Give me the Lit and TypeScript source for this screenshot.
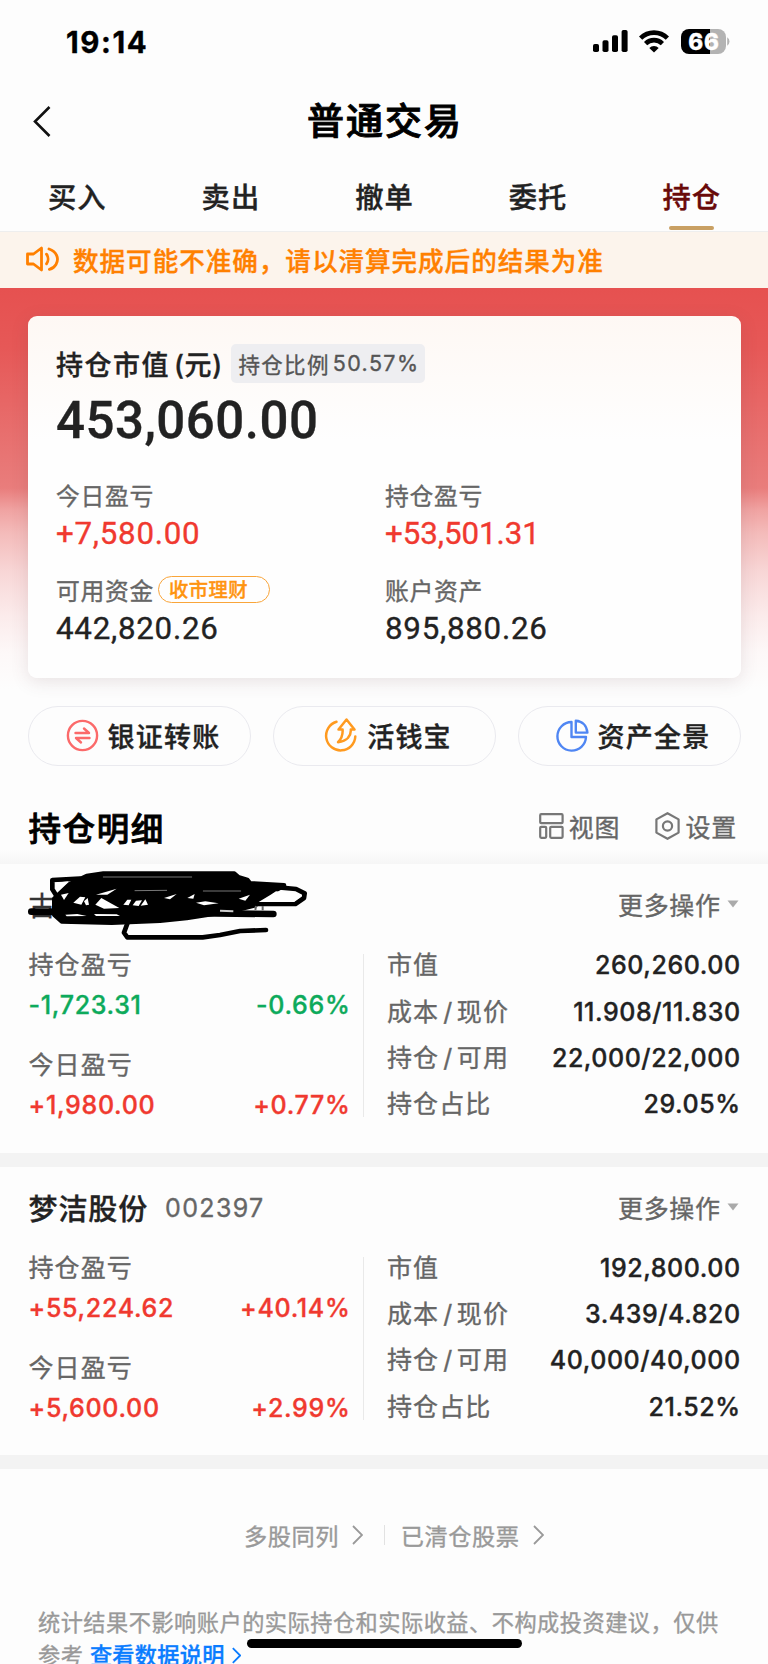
import { LitElement, html, css, nothing } from "lit";
import { customElement, property } from "lit/decorators.js";

interface Holding {
  name: string;
  code: string;
  redacted?: boolean;
  profit: [string, string];
  today: [string, string];
  rows: [string, string][];
}

const TABS = ["买入", "卖出", "撤单", "委托", "持仓"];

const HOLDINGS: Holding[] = [
  {
    name: "古",
    code: "",
    redacted: true,
    profit: ["-1,723.31", "-0.66%"],
    today: ["+1,980.00", "+0.77%"],
    rows: [
      ["市值", "260,260.00"],
      ["成本/现价", "11.908/11.830"],
      ["持仓/可用", "22,000/22,000"],
      ["持仓占比", "29.05%"],
    ],
  },
  {
    name: "梦洁股份",
    code: "002397",
    profit: ["+55,224.62", "+40.14%"],
    today: ["+5,600.00", "+2.99%"],
    rows: [
      ["市值", "192,800.00"],
      ["成本/现价", "3.439/4.820"],
      ["持仓/可用", "40,000/40,000"],
      ["持仓占比", "21.52%"],
    ],
  },
];

const chevron = (cls: string, w: number) => html`
  <svg class=${cls} viewBox="0 0 11 20" fill="none" stroke="currentColor" stroke-width=${w}>
    <path d="M1 1L10 10L1 19" />
  </svg>`;

@customElement("status-bar")
export class StatusBar extends LitElement {
  static styles = css`
    :host { display: flex; align-items: center; height: 82px; padding: 0 38px 0 66px; color: #000; }
    .time { flex: 1; font-size: 29.5px; font-weight: 700; letter-spacing: 1.6px; line-height: 40px; padding-top: 1px; }
    svg { display: block; }
    .signal { margin-right: 11px; }
    .wifi { margin-right: 12px; }
    .battery { position: relative; width: 49px; height: 25px; }
    .level { position: absolute; inset: 0 3px 0 0; display: flex; align-items: center; justify-content: center;
      font-size: 22.5px; font-weight: 800; color: #fff; letter-spacing: .8px; }
  `;
  render() {
    return html`
      <span class="time">19:14</span>
      <svg class="signal" width="35" height="22" viewBox="0 0 35 22">
        <rect x="0" y="14" width="6" height="8" rx="1.8" />
        <rect x="9.5" y="10.3" width="6" height="11.7" rx="1.8" />
        <rect x="19" y="5.2" width="6" height="16.8" rx="1.8" />
        <rect x="28.6" y="0" width="6" height="22" rx="1.8" />
      </svg>
      <svg class="wifi" width="30" height="23" viewBox="0 0 30 23" fill="none" stroke="#000" stroke-width="4.6">
        <path d="M1.6 8.2A19 19 0 0 1 28.4 8.2" />
        <path d="M6.6 13.6A12 12 0 0 1 23.4 13.6" />
        <path d="M15 22.5L10.3 18A6.6 6.6 0 0 1 19.7 18Z" fill="#000" stroke="none" />
      </svg>
      <div class="battery">
        <svg width="49" height="25" viewBox="0 0 49 25">
          <path d="M8 0H29V25H8A8 8 0 0 1 0 17V8A8 8 0 0 1 8 0Z" />
          <path d="M29 0H37A8 8 0 0 1 45 8V17A8 8 0 0 1 37 25H29Z" fill="#b3b3b3" />
          <path d="M46.2 8.3A5 5 0 0 1 46.2 16.7Z" fill="#b3b3b3" />
        </svg>
        <span class="level">66</span>
      </div>`;
  }
}

@customElement("asset-card")
export class AssetCard extends LitElement {
  static styles = css`
    :host { display: block; box-sizing: border-box; height: 362px; padding: 28px 28px 0 28.5px; border-radius: 9px;
      background: linear-gradient(#fef8f4 0, #fefefe 125px); box-shadow: 0 4px 18px rgba(90, 60, 70, .13); }
    .head { display: flex; align-items: center; height: 39px; }
    .title { width: 175px; font-size: 27px; font-weight: 500; letter-spacing: 1.5px; color: #222; white-space: nowrap; }
    .paren { margin-left: 4px; letter-spacing: .6px; }
    .badge { display: flex; align-items: center; box-sizing: border-box; width: 194px; height: 39px; padding: 0 0 1px 7.5px;
      border-radius: 5px; background: #eeeef1; color: #555; font-size: 21.5px; letter-spacing: 1.3px; white-space: nowrap; }
    .ratio { margin-left: 3px; letter-spacing: 1.4px; }
    .total { height: 58px; margin-top: 9px; font: 500 51px/58px Roboto, sans-serif; letter-spacing: .5px; color: #222; }
    .grid { display: grid; grid-template-columns: 329px 1fr; row-gap: 24px; margin-top: 29px; }
    .label { display: flex; align-items: center; height: 30px; font-size: 23.8px; letter-spacing: .7px; color: #666; }
    .pill { display: flex; align-items: center; box-sizing: border-box; width: 112px; height: 27px; margin-left: 4px; padding-left: 10px;
      border: 1.5px solid #f9a53a; border-radius: 14px; color: #ff9410; font-size: 19.3px; font-weight: 500; letter-spacing: .5px; }
    .value { margin: 7px 0 -2px; font: 400 31.3px/36px Roboto, sans-serif; letter-spacing: .75px; color: #222; }
    .up { color: #f0392f; }
    .tight { letter-spacing: -.05px; }
  `;
  render() {
    return html`
      <div class="head">
        <span class="title">持仓市值<span class="paren">(元)</span></span>
        <span class="badge">持仓比例<span class="ratio">50.57%</span></span>
      </div>
      <div class="total">453,060.00</div>
      <div class="grid">
        <div><div class="label">今日盈亏</div><div class="value up">+7,580.00</div></div>
        <div><div class="label">持仓盈亏</div><div class="value up tight">+53,501.31</div></div>
        <div><div class="label">可用资金<span class="pill">收市理财</span></div><div class="value">442,820.26</div></div>
        <div><div class="label">账户资产</div><div class="value">895,880.26</div></div>
      </div>`;
  }
}

@customElement("holding-item")
export class HoldingItem extends LitElement {
  @property({ attribute: false }) data!: Holding;
  static styles = css`
    :host { display: block; box-sizing: border-box; height: 302.5px; border-bottom: 14.5px solid #f3f3f3; padding: 20px 28px 0 28.5px; }
    .head { position: relative; display: flex; align-items: center; height: 40px; }
    .name { font-size: 29px; font-weight: 500; letter-spacing: .9px; color: #222; }
    .thin { font-weight: 400; font-size: 27px; color: #333; }
    .code { margin: 2px 0 0 17px; font-size: 25px; letter-spacing: 1.35px; color: #666; }
    .scribble { position: absolute; left: -8.5px; top: -22px; width: 300px; height: 90px; }
    .more { display: flex; align-items: center; gap: 6px; margin-left: auto; margin-right: 1.5px; font-size: 25px; letter-spacing: .6px; color: #666; }
    .body { display: flex; margin-top: 30px; height: 163px; }
    .left { box-sizing: border-box; width: 335px; padding-right: 12px; border-right: 1.5px solid #e9e9e9; }
    .right { flex: 1; padding-left: 23.5px; margin-top: -12px; }
    .label { font-size: 25px; letter-spacing: 1.1px; color: #666; line-height: 40px; white-space: nowrap; }
    .left .label { margin-top: -9px; }
    .left .pair + .label { margin-top: 20px; }
    .pair, .row { display: flex; justify-content: space-between; align-items: center; }
    .pair { height: 40px; font-size: 25px; font-weight: 500; letter-spacing: .7px; }
    .row { height: 46.4px; }
    .num { font-size: 25px; font-weight: 500; color: #222; letter-spacing: .55px; margin-right: -.6px; }
    .slash { margin: 0 3.5px 0 4px; }
    .up { color: #f0392f; }
    .down { color: #0daa5b; }
  `;
  private scribble() {
    return html`<svg class="scribble" viewBox="0 0 900 270" fill="none" stroke="#000" stroke-width="14" stroke-linecap="round" stroke-linejoin="round">
      <path d="M103 110L150 66L200 42L250 35H643L655 46L682 54L690 64L792 70L748 96L705 130L640 146L500 168L420 176L275 182L125 178L103 158Z" fill="#000" />
      <path d="M180 50L97 54V82L112 106" />
      <path d="M690 68L828 81L854 94L852 108L826 126H690" />
      <path d="M34 149L400 152L760 156" stroke-width="20" />
      <path d="M322 185L312 212L322 226H548L600 219L660 207L738 204" />
      <g fill="#fff" stroke="none">
        <path d="M106 62L146 58L112 90Z" />
        <path d="M123 98L146 93L132 114Z" />
        <path d="M160 122L180 104L196 106L184 128Z" />
        <path d="M192 118L203 108L207 128L198 130Z" />
        <path d="M226 128L244 108L298 138L252 140Z" />
        <path d="M136 158L172 156L200 162L140 163Z" />
        <path d="M222 156L290 157L300 162L228 162Z" />
        <path d="M310 128L322 113L334 113L326 130Z" />
        <path d="M338 130L348 116L366 115L356 132Z" />
        <path d="M362 131L376 112L384 128Z" />
        <path d="M228 98L290 80L262 98Z" />
        <path d="M432 108L470 96L450 112Z" />
        <path d="M502 108L524 96L520 110Z" />
        <path d="M528 122L556 118L596 124L552 130Z" />
        <path d="M656 110L690 98L676 116Z" />
        <path d="M752 98L768 88L826 94L842 104L822 120L716 120Z" />
      </g>
      <g stroke="#777" stroke-width="3">
        <path d="M250 45H515" /><path d="M550 87H662" /><path d="M345 86L440 85" />
      </g>
      <g stroke="#666" stroke-width="6" stroke-linecap="butt">
        <path d="M728 132V145" /><path d="M708 132L706 144" /><path d="M600 146L640 148" stroke="#ccc" />
      </g>
    </svg>`;
  }
  render() {
    const d = this.data;
    const tone = (v: string) => (v.startsWith("-") ? "down" : "up");
    const label = (l: string) => {
      const [a, b] = l.split("/");
      return b ? html`${a}<span class="slash">/</span>${b}` : a;
    };
    return html`
      <div class="head">
        <span class="name ${d.redacted ? "thin" : ""}">${d.name}</span>
        ${d.code ? html`<span class="code">${d.code}</span>` : nothing}
        ${d.redacted ? this.scribble() : nothing}
        <span class="more">更多操作<svg width="12" height="8" viewBox="0 0 12 8"><path d="M.5 .5H11.5L6 7.5Z" fill="#aaa" /></svg></span>
      </div>
      <div class="body">
        <div class="left">
          <div class="label">持仓盈亏</div>
          <div class="pair ${tone(d.profit[0])}"><span>${d.profit[0]}</span><span>${d.profit[1]}</span></div>
          <div class="label">今日盈亏</div>
          <div class="pair ${tone(d.today[0])}"><span>${d.today[0]}</span><span>${d.today[1]}</span></div>
        </div>
        <div class="right">
          ${d.rows.map(([l, v]) => html`<div class="row"><span class="label">${label(l)}</span><span class="num">${v}</span></div>`)}
        </div>
      </div>`;
  }
}

@customElement("app-root")
export class AppRoot extends LitElement {
  static styles = css`
    :host { display: block; position: relative; height: 1664px; overflow: hidden; background: #fdfdfd; color: #222;
      font-family: Inter, "Noto Sans CJK SC", sans-serif; -webkit-text-stroke: .35px; }
    svg { display: block; flex: none; }
    .nav { display: grid; grid-template-columns: 52px 1fr 52px; align-items: center; height: 74px; }
    .back { width: 18px; height: 31px; margin: 5px 0 0 33px; }
    .nav-title { padding-left: 2px; text-align: center; font-size: 37px; font-weight: 500; letter-spacing: 2px; color: #000; -webkit-text-stroke: .9px; }
    .tabs { display: grid; grid-template-columns: repeat(5, 1fr); height: 76px; box-sizing: border-box; border-bottom: 1px solid #eee; }
    .tab { display: flex; flex-direction: column; align-items: center; padding-top: 22px; font-size: 28.3px; line-height: 40px; font-weight: 500; letter-spacing: 1px; text-indent: 1px; }
    .active { color: #690a0a; }
    .active::after { content: ""; width: 45px; height: 4px; margin-top: 8px; border-radius: 2px; background: #c9a063; }
    .notice { display: flex; align-items: center; gap: 14px; height: 56px; box-sizing: border-box; padding: 0 0 2px 26px; background: #fcf4ec;
      color: #ff8000; font-size: 25.6px; font-weight: 500; letter-spacing: .95px; white-space: nowrap; }
    .hero { padding: 28px 27.5px 0; height: 418px; box-sizing: border-box;
      background: linear-gradient(#e65150 0, #e65857 60px, #e87473 165px, #e97d7c 200px, #f0a3a2 222px, #f4bbba 245px, #f8d7d7 285px, #fbeaea 325px, #fdf8f8 365px, #fdfdfd 402px); }
    .quick { display: grid; grid-template-columns: repeat(3, 1fr); gap: 22px; padding: 0 27px 0 28px; }
    .btn { display: flex; align-items: center; justify-content: center; box-sizing: border-box; height: 60px; border: 1.5px solid #eaeaef; border-radius: 30px;
      font-size: 27px; font-weight: 500; letter-spacing: 1.2px; gap: 9px; padding: 0 0 2px 7px; }
    .section { display: flex; align-items: center; height: 98px; box-sizing: border-box; padding: 22px 31px 0 28.5px;
      background: linear-gradient(transparent 84px, #f6f6f6 98px); }
    .section-title { flex: 1; font-size: 32.5px; font-weight: 500; letter-spacing: 1.6px; color: #000; -webkit-text-stroke: .8px; }
    .tool { display: flex; align-items: center; gap: 5px; margin-left: 35px; font-size: 25px; letter-spacing: .8px; color: #666; }
    .links { display: flex; align-items: center; height: 30px; margin: 51px 0 0 244px; font-size: 23.2px; letter-spacing: .6px; color: #999; }
    .chev { width: 11px; height: 20px; margin-left: 13px; }
    .sep { width: 1.5px; height: 20px; margin: 0 15.5px 0 20.5px; background: #e2e2e2; }
    .foot { margin: 57px 0 0 38px; font-size: 22.2px; letter-spacing: .5px; line-height: 32.6px; color: #999; white-space: nowrap; }
    .foot-row { display: flex; align-items: center; height: 32.6px; }
    .link { display: flex; align-items: center; margin-left: 6.5px; color: #0a7cff; font-weight: 500; letter-spacing: .3px; }
    .chev-sm { width: 9px; height: 17px; margin-left: 7px; }
    .home { position: absolute; left: 247px; top: 1638.5px; width: 275px; height: 9px; border-radius: 5px; background: #000; }
  `;
  render() {
    return html`
      <status-bar></status-bar>
      <div class="nav">
        <svg class="back" viewBox="0 0 18 31" fill="none" stroke="#111" stroke-width="2.6"><path d="M16.5 1L2 15.5L16.5 30" /></svg>
        <div class="nav-title">普通交易</div>
      </div>
      <div class="tabs">${TABS.map((t, i) => html`<div class="tab ${i === 4 ? "active" : ""}">${t}</div>`)}</div>
      <div class="notice">
        <svg width="33" height="26" viewBox="0 0 33 26" fill="none" stroke="#ff8000" stroke-width="2.8" stroke-linejoin="round" stroke-linecap="round">
          <path d="M1.5 8H7.5L15.5 2V24L7.5 18H1.5Z" />
          <path d="M20.5 8.2C22.6 11 22.6 15 20.5 17.8" /><path d="M23 3C30.5 5.5 33.5 12.5 30 18.5C28.6 21 26.2 22.6 23.4 23.4" />
        </svg>
        <span>数据可能不准确，请以清算完成后的结果为准</span>
      </div>
      <div class="hero"><asset-card></asset-card></div>
      <div class="quick">
        <div class="btn">
          <svg width="33" height="33" viewBox="0 0 33 33" fill="none" stroke="#fb6a6a" stroke-width="2.4" stroke-linejoin="round" stroke-linecap="round">
            <circle cx="16.5" cy="16.5" r="14.6" /><path d="M9.5 14H23L18 9.5" /><path d="M23.5 19H10L15 23.5" />
          </svg><span>银证转账</span>
        </div>
        <div class="btn">
          <svg width="34" height="34" viewBox="0 0 34 34" fill="none" stroke="#ff9a1f" stroke-width="2.5" stroke-linejoin="round" stroke-linecap="round">
            <path d="M12.5 3.8A14.6 14.6 0 1 0 31.3 18.5" />
            <path d="M22.5 1.5L30.5 11.5H26.8C27.2 17.5 23.5 23 14 24.2C17.8 20.5 19 17 18.6 11.5H14.5Z" />
          </svg><span>活钱宝</span>
        </div>
        <div class="btn">
          <svg width="33" height="33" viewBox="0 0 33 33" fill="none" stroke="#4f86f3" stroke-width="2.4" stroke-linejoin="round" stroke-linecap="round">
            <path d="M15.5 3A14.3 14.3 0 1 0 30 18H15.5Z" /><path d="M19.8 1.8C26.5 2.2 30.8 6.8 31.4 13.6H19.8Z" />
          </svg><span>资产全景</span>
        </div>
      </div>
      <div class="section">
        <span class="section-title">持仓明细</span>
        <div class="tool">
          <svg width="25" height="26" viewBox="0 0 25 26" fill="none" stroke="#777" stroke-width="2.2"><rect x="1.2" y="1.2" width="22.4" height="9" rx="1" /><rect x="1.2" y="13.8" width="6" height="11" rx="1" /><rect x="11.2" y="13.8" width="12.4" height="11" rx="1" /></svg>
          <span>视图</span>
        </div>
        <div class="tool">
          <svg width="25" height="28" viewBox="0 0 25 28" fill="none" stroke="#777" stroke-width="2.2" stroke-linejoin="round"><path d="M12.5 1.2L23.6 7.4V20.6L12.5 26.8L1.4 20.6V7.4Z" /><circle cx="12.5" cy="14" r="4.6" /></svg>
          <span>设置</span>
        </div>
      </div>
      ${HOLDINGS.map((h) => html`<holding-item .data=${h}></holding-item>`)}
      <div class="links"><span>多股同列</span>${chevron("chev", 1.8)}<span class="sep"></span><span>已清仓股票</span>${chevron("chev", 1.8)}</div>
      <div class="foot">
        <div class="foot-row">统计结果不影响账户的实际持仓和实际收益、不构成投资建议，仅供</div>
        <div class="foot-row">参考<span class="link">查看数据说明${chevron("chev-sm", 2.2)}</span></div>
      </div>
      <div class="home"></div>`;
  }
}
